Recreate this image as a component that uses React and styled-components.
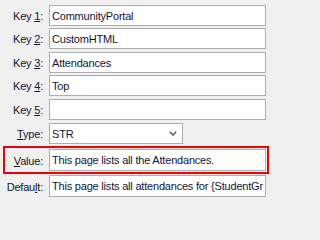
import React from 'react';
import styled, { createGlobalStyle } from 'styled-components';

const GlobalStyle = createGlobalStyle`
  html, body {
    margin: 0;
    padding: 0;
    background: #f0f0f0;
  }
  body {
    font-family: "Liberation Sans", Arial, sans-serif;
    font-size: 11px;
    letter-spacing: -0.2px;
    color: #141432;
  }
`;

const Form = styled.div`
  width: 271px;
  height: 202px;
  padding-top: 5px;
  box-sizing: border-box;
  overflow: hidden;
`;

const Row = styled.div`
  display: grid;
  grid-template-columns: ${(p) => (p.$highlight ? '38px' : '40px')} auto;
  column-gap: 6px;
  align-items: center;
  margin-top: ${(p) => p.$mt || 0}px;
  margin-left: 3px;
  width: ${(p) => (p.$highlight ? '266px' : 'auto')};
  box-sizing: border-box;
  border: ${(p) => (p.$highlight ? '2px solid #f00000' : 'none')};
  padding: ${(p) => (p.$highlight ? '1px 1px 1px 0' : '0')};
`;

const Label = styled.label`
  text-align: right;
  white-space: nowrap;
  color: #141432;
  padding-top: 1px;
`;

const Field = styled.input`
  width: 217px;
  height: ${(p) => p.$h || 21}px;
  box-sizing: border-box;
  margin: 0;
  border: 1px solid #adadad;
  background: #fff;
  padding: 0 2px;
  font-family: "Liberation Sans", Arial, sans-serif;
  font-size: 11px;
  letter-spacing: -0.2px;
  color: #141432;
  outline: none;
`;

const Combo = styled.div`
  width: 134px;
  height: 21px;
  box-sizing: border-box;
  border: 1px solid #adadad;
  background: #fff;
  display: flex;
  align-items: center;
  justify-content: space-between;
  padding: 0 5px 0 2px;
`;

const Chevron = () => (
  <svg width="8" height="5" viewBox="0 0 8 5">
    <polyline points="0.8,0.8 4,4 7.2,0.8" fill="none" stroke="#555" strokeWidth="1.4" />
  </svg>
);

const keys = [
  { n: 1, v: 'CommunityPortal', mt: 0 },
  { n: 2, v: 'CustomHTML', mt: 2 },
  { n: 3, v: 'Attendances', mt: 3 },
  { n: 4, v: 'Top', mt: 2 },
  { n: 5, v: '', mt: 3 },
];

export default function App() {
  return (
    <>
      <GlobalStyle />
      <Form>
        {keys.map((k) => (
          <Row key={k.n} $mt={k.mt}>
            <Label>
              Key <u>{k.n}</u>:
            </Label>
            <Field defaultValue={k.v} readOnly />
          </Row>
        ))}
        <Row $mt={3}>
          <Label>
            <u>T</u>ype:
          </Label>
          <Combo>
            <span>STR</span>
            <Chevron />
          </Combo>
        </Row>
        <Row $mt={2} $highlight>
          <Label>
            <u>V</u>alue:
          </Label>
          <Field $h={22} defaultValue="This page lists all the Attendances." readOnly />
        </Row>
        <Row $mt={1}>
          <Label>
            Defau<u>l</u>t:
          </Label>
          <Field $h={22} defaultValue="This page lists all attendances for {StudentGroup}" readOnly />
        </Row>
      </Form>
    </>
  );
}
